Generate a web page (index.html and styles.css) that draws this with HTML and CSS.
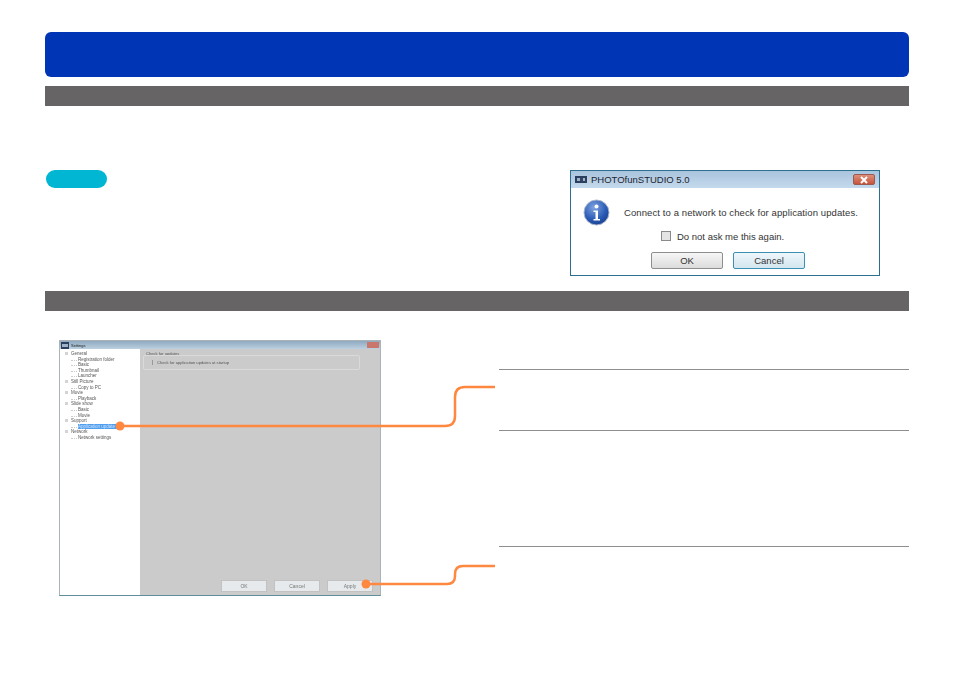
FILE: index.html
```html
<!DOCTYPE html>
<html lang="en">
<head>
    <meta charset="UTF-8">
    <meta name="viewport" content="width=device-width, initial-scale=1.0">
    <title>Application updates</title>
    <link rel="stylesheet" href="styles.css">
</head>
<body>
    <div class="page">
        <div class="title-bar"></div>
        <div class="section-bar first"></div>

        <div class="intro">
            <div class="pill"></div>

            <div class="dialog">
                <div class="dialog-title">
                    <svg class="app-icon" width="12" height="7" viewBox="0 0 12 7">
                        <rect width="12" height="7" fill="#2b3f5e"/>
                        <rect x="2" y="2" width="8" height="3" fill="#9fb2c8"/>
                        <rect x="5" y="2" width="3" height="3" fill="#32465f"/>
                    </svg>
                    <span>PHOTOfunSTUDIO 5.0</span>
                    <div class="close-btn">
                        <svg width="10" height="8" viewBox="0 0 10 8">
                            <path d="M2 1l6 6M8 1L2 7" stroke="#fff" stroke-width="2" fill="none"/>
                        </svg>
                    </div>
                </div>
                <div class="dialog-body">
                    <svg class="info-icon" width="27" height="27" viewBox="0 0 27 27">
                        <defs>
                            <radialGradient id="infoFill" cx="0.4" cy="0.3" r="0.8">
                                <stop offset="0" stop-color="#7fa3e0"/>
                                <stop offset="0.6" stop-color="#2a5bb5"/>
                                <stop offset="1" stop-color="#173a85"/>
                            </radialGradient>
                        </defs>
                        <circle cx="13.5" cy="13.5" r="12.5" fill="url(#infoFill)" stroke="#a9b6cc"/>
                        <circle cx="13.5" cy="7.5" r="2" fill="#fff"/>
                        <path d="M10.5 11.500h4.500v8.500h2v1.500h-6.500v-1.500h2v-7h-2z" fill="#fff"/>
                    </svg>
                    <div class="dialog-msg">Connect to a network to check for application updates.</div>
                </div>
                <label class="dialog-check"><span class="check-box"></span><span class="check-text">Do not ask me this again.</span></label>
                <div class="dialog-btns">
                    <div class="dlg-btn">OK</div>
                    <div class="dlg-btn focus">Cancel</div>
                </div>
            </div>
        </div>

        <div class="section-bar"></div>

        <div class="detail">
            <div class="settings">
                <div class="settings-title">
                    <svg width="8" height="7" viewBox="0 0 8 7">
                        <rect width="8" height="7" fill="#2b3f5e"/>
                        <rect x="1" y="2" width="6" height="3" fill="#9fb2c8"/>
                    </svg>
                    <span>Settings</span>
                    <div class="settings-close"></div>
                </div>
                <div class="settings-main">
                    <ul class="tree">
                        <li>General</li>
                        <li class="sub">Registration folder</li>
                        <li class="sub">Basic</li>
                        <li class="sub">Thumbnail</li>
                        <li class="sub">Launcher</li>
                        <li>Still Picture</li>
                        <li class="sub">Copy to PC</li>
                        <li>Movie</li>
                        <li class="sub">Playback</li>
                        <li>Slide show</li>
                        <li class="sub">Basic</li>
                        <li class="sub">Movie</li>
                        <li>Support</li>
                        <li class="sub active">Application update</li>
                        <li>Network</li>
                        <li class="sub">Network settings</li>
                    </ul>
                    <div class="settings-pane">
                        <div class="group-label">Check for updates</div>
                        <div class="group-box"><span class="radio"></span>Check for application updates at startup</div>
                        <div class="settings-btns">
                            <div class="set-btn">OK</div>
                            <div class="set-btn">Cancel</div>
                            <div class="set-btn">Apply</div>
                        </div>
                    </div>
                </div>
            </div>

            <div class="notes">
                <div class="note one"></div>
                <div class="note two"></div>
                <div class="note three"></div>
            </div>

            <!-- callout lines, coordinates relative to .detail -->
            <svg class="callouts" width="864" height="300" viewBox="0 0 864 300">
                <g fill="none" stroke="#ff8840" stroke-width="2.500">
                    <path d="M75 115H400Q410 115 410 105V86Q410 76 420 76H450"/>
                    <path d="M321 273H402Q410 273 410 265V263Q410 255 418 255H450"/>
                </g>
                <circle cx="75" cy="115" r="4.500" fill="#ff8840"/>
                <circle cx="321" cy="273" r="4.500" fill="#ff8840"/>
            </svg>
        </div>
    </div>
</body>
</html>
```

FILE: styles.css
```css
* {
    margin: 0;
    padding: 0;
    box-sizing: border-box;
}

body {
    font-family: 'Liberation Sans', Arial, sans-serif;
    background: white;
}

.page {
    width: 954px;
    height: 673px;
    padding: 32px 45px 0;
}

.title-bar {
    height: 45px;
    background: #0035b5;
    border-radius: 6px;
}

.section-bar {
    height: 20px;
    background: #666464;
}

.section-bar.first {
    margin-top: 9px;
}

/* top section */
.intro {
    height: 185px;
    padding-top: 64px;
    display: flex;
    justify-content: space-between;
    align-items: flex-start;
}

.pill {
    width: 61px;
    height: 18px;
    margin-left: 1px;
    background: #00b6d3;
    border-radius: 9px;
}

.dialog {
    width: 310px;
    height: 106px;
    margin-right: 29px;
    background: white;
    border: 1px solid #2d6f8e;
    color: #333;
    display: flex;
    flex-direction: column;
}

.dialog-title {
    height: 17px;
    padding: 0 4px;
    background: linear-gradient(#a9c4de, #c4d9ec);
    display: flex;
    align-items: center;
    gap: 4px;
    font-size: 9.500px;
    color: #1c2430;
}

.app-icon {
    flex-shrink: 0;
}

.close-btn {
    width: 22px;
    height: 11px;
    margin-left: auto;
    background: linear-gradient(#dd8f7a, #c8543c);
    border: 1px solid #9a5a50;
    border-radius: 2px;
    display: flex;
    align-items: center;
    justify-content: center;
}

.dialog-body {
    height: 38px;
    padding: 11px 0 0 12px;
    display: flex;
    align-items: center;
}

.info-icon {
    flex-shrink: 0;
}

.dialog-msg {
    margin-left: 14px;
    font-size: 9.500px;
    letter-spacing: 0.1px;
    white-space: nowrap;
}

.dialog-check {
    height: 20px;
    padding-left: 90px;
    display: flex;
    align-items: center;
    gap: 6px;
    font-size: 9.500px;
}

.check-box {
    width: 10px;
    height: 10px;
    background: #e4e4e4;
    border: 1px solid #8a8a8a;
}

.dialog-btns {
    margin-top: 6px;
    padding-left: 80px;
    display: flex;
    gap: 10px;
}

.dlg-btn {
    width: 72px;
    height: 17px;
    background: linear-gradient(#f6f6f6, #dcdcdc);
    border: 1px solid #8e8e8e;
    border-radius: 2px;
    text-align: center;
    font-size: 9.500px;
    line-height: 15px;
}

.dlg-btn.focus {
    background: linear-gradient(#eef7fb, #d4e6ef);
    border-color: #3a90b5;
}

/* bottom section */
.detail {
    position: relative;
    padding: 29px 0 0 14px;
    display: flex;
    align-items: flex-start;
}

.settings {
    width: 322px;
    height: 256px;
    border: 1px solid #aab4b8;
    border-bottom-color: #5f8f9c;
    display: flex;
    flex-direction: column;
    background: #cbcbcb;
}

.settings-title {
    height: 8px;
    padding: 0 1px;
    background: linear-gradient(#8fa9c0, #bcd0e0);
    display: flex;
    align-items: center;
    gap: 2px;
    font-size: 4px;
    color: #222;
    filter: blur(0.4px);
}

.settings-close {
    width: 12px;
    height: 6px;
    margin-left: auto;
    background: #c9776c;
}

.settings-main {
    flex: 1;
    display: flex;
    min-height: 0;
}

.tree {
    width: 80px;
    background: white;
    list-style: none;
    padding: 2px 0 0 11px;
    font-size: 4.500px;
    line-height: 5.600px;
    color: #555;
    filter: blur(0.4px);
}

.tree li {
    position: relative;
}

/* expander box in front of each top level item */
.tree li:not(.sub)::before {
    content: '';
    position: absolute;
    left: -6px;
    top: 1px;
    width: 3px;
    height: 3px;
    background: #d4d4d4;
}

/* dotted branch in front of child items */
.tree .sub::before {
    content: '';
    position: absolute;
    left: 0;
    top: 3px;
    width: 6px;
    border-top: 1px dotted #ccc;
}

.tree .sub {
    padding-left: 7px;
}

.tree .active {
    width: 44px;
    margin-left: 7px;
    padding-left: 0;
    background: #4f9ef0;
    color: #cfe4fa;
}

.tree .active::before {
    left: -7px;
}

.settings-pane {
    flex: 1;
    padding: 2px 7px 3px 3px;
    display: flex;
    flex-direction: column;
    font-size: 4.100px;
    color: #555;
}

.group-label {
    padding-left: 3px;
    line-height: 6px;
    margin-bottom: -2px;
    filter: blur(0.4px);
}

.group-box {
    width: 217px;
    height: 15px;
    padding-left: 8px;
    border: 1px solid #dadada;
    border-radius: 2px;
    display: flex;
    align-items: center;
    gap: 2px;
    filter: blur(0.3px);
}

.radio {
    width: 3px;
    height: 5px;
    border-left: 1px solid #999;
}

.settings-btns {
    margin-top: auto;
    display: flex;
    justify-content: flex-end;
    gap: 7px;
}

.set-btn {
    width: 46px;
    height: 12px;
    background: #e6eaec;
    border: 1px solid #c2c2c2;
    text-align: center;
    font-size: 5px;
    line-height: 10px;
    color: #777;
    filter: blur(0.3px);
}

.notes {
    width: 410px;
    margin-left: 118px;
}

.note {
    border-top: 1px solid #8e8e8e;
}

.note.one {
    margin-top: 29px;
    height: 61px;
}

.note.two {
    height: 116px;
}

.note.three {
    height: 50px;
}

.callouts {
    position: absolute;
    left: 0;
    top: 0;
    pointer-events: none;
}
```
